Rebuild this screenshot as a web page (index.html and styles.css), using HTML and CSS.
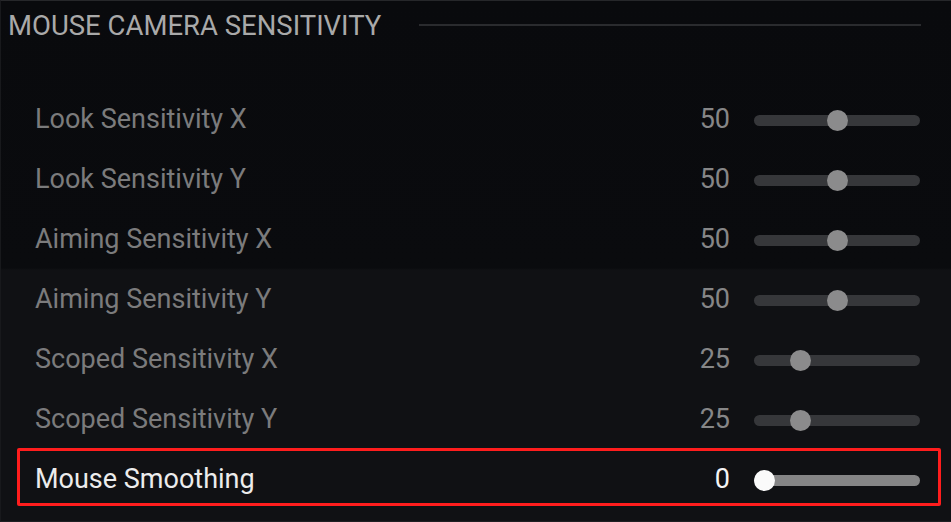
FILE: index.html
```html
<!DOCTYPE html>
<html lang="en">
<head>
<meta charset="utf-8">
<title>Mouse Camera Sensitivity</title>
<link rel="stylesheet" href="styles.css">
</head>
<body>
<main class="screen">
  <header class="section-head">
    <h1 class="section-title">MOUSE CAMERA SENSITIVITY</h1>
    <span class="section-rule"></span>
  </header>
  <ul class="settings">
    <li class="row">
      <span class="label">Look Sensitivity X</span>
      <span class="value">50</span>
      <span class="slider"><span class="thumb" style="left:73px"></span></span>
    </li>
    <li class="row">
      <span class="label">Look Sensitivity Y</span>
      <span class="value">50</span>
      <span class="slider"><span class="thumb" style="left:73px"></span></span>
    </li>
    <li class="row">
      <span class="label">Aiming Sensitivity X</span>
      <span class="value">50</span>
      <span class="slider"><span class="thumb" style="left:73px"></span></span>
    </li>
    <li class="row">
      <span class="label">Aiming Sensitivity Y</span>
      <span class="value">50</span>
      <span class="slider"><span class="thumb" style="left:73px"></span></span>
    </li>
    <li class="row">
      <span class="label">Scoped Sensitivity X</span>
      <span class="value">25</span>
      <span class="slider"><span class="thumb" style="left:36px"></span></span>
    </li>
    <li class="row">
      <span class="label">Scoped Sensitivity Y</span>
      <span class="value">25</span>
      <span class="slider"><span class="thumb" style="left:36px"></span></span>
    </li>
    <li class="row row-active">
      <span class="label">Mouse Smoothing</span>
      <span class="value">0</span>
      <span class="slider"><span class="thumb" style="left:0px"></span></span>
    </li>
  </ul>
</main>
</body>
</html>
```
FILE: styles.css
```css
* { box-sizing: border-box; }

html, body {
  margin: 0;
  padding: 0;
  background: #0c0d10;
}

.screen {
  width: 951px;
  height: 522px;
  overflow: hidden;
  border-top: 1px solid #26272a;
  border-left: 1px solid #18191c;
  border-bottom: 1px solid #1e1f22;
  background: linear-gradient(to bottom, #090a0d 0, #0a0b0e 267px, #101114 269px, #101114 100%);
  font-family: Roboto, "Liberation Sans", sans-serif;
  display: flex;
  flex-direction: column;
}

.section-head {
  height: 49px;
  display: flex;
  align-items: center;
  padding-left: 7px;
  padding-right: 30px;
}

.section-title {
  margin: 0;
  font-size: 27.5px;
  font-weight: 400;
  color: #a9a9a9;
  line-height: 1;
  white-space: nowrap;
}

.section-rule {
  flex: 1;
  height: 2px;
  margin-left: 38px;
  margin-top: -1px;
  background: #2a2b2e;
}

.settings {
  list-style: none;
  margin: 38px 0 0 0;
  padding: 0;
  display: flex;
  flex-direction: column;
  gap: 2px;
}

.row {
  height: 58px;
  margin: 0 10px 0 16px;
  padding: 3px 18px 0 15px;
  border: 3px solid transparent;
  border-radius: 2px;
  display: flex;
  align-items: center;
}

.label {
  flex: 1;
  font-size: 27px;
  color: #7b7b7c;
  white-space: nowrap;
}

.value {
  font-size: 27px;
  color: #868687;
  text-align: right;
  margin-right: 24px;
}

.slider {
  position: relative;
  width: 166px;
  height: 11px;
  border-radius: 6px;
  background: #36373a;
  margin-top: 4px;
}

.thumb {
  position: absolute;
  top: -5px;
  width: 21px;
  height: 21px;
  border-radius: 50%;
  background: #8b8b8c;
}

.row-active {
  border-color: #ff1d1d;
}

.row-active .label {
  color: #ececec;
}

.row-active .value {
  color: #f5f5f5;
}

.row-active .slider {
  background: #858586;
}

.row-active .thumb {
  background: #fafafa;
}
```
